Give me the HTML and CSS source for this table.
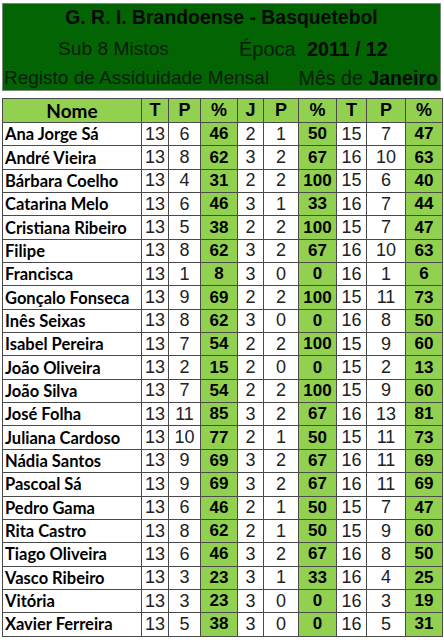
FILE: index.html
```html
<!DOCTYPE html>
<html lang="pt">
<head>
<meta charset="utf-8">
<link rel="stylesheet" href="styles.css">
</head>
<body>
<div class="banner">
  <div class="title">G. R. I. Brandoense - Basquetebol</div>
  <div class="line2"><span class="sub">Sub 8 Mistos</span><span class="epoca">Época <b>2011 / 12</b></span></div>
  <div class="line3"><span class="reg">Registo de Assiduidade Mensal</span><span class="mes">Mês de <b>Janeiro</b></span></div>
</div>
<table class="grid">
  <colgroup>
    <col class="c-name"><col class="c-t"><col class="c-p"><col class="c-pc"><col class="c-j"><col class="c-p2"><col class="c-pc2"><col class="c-t2"><col class="c-p3"><col class="c-pc3">
  </colgroup>
  <thead>
    <tr><th class="name-h">Nome</th><th>T</th><th>P</th><th>%</th><th>J</th><th>P</th><th>%</th><th>T</th><th>P</th><th>%</th></tr>
  </thead>
  <tbody id="rows"></tbody>
</table>
<script src="app.js"></script>
</body>
</html>
```
FILE: app.js
```js
const data = [
["Ana Jorge Sá",13,6,46,2,1,50,15,7,47],
["André Vieira",13,8,62,3,2,67,16,10,63],
["Bárbara Coelho",13,4,31,2,2,100,15,6,40],
["Catarina Melo",13,6,46,3,1,33,16,7,44],
["Cristiana Ribeiro",13,5,38,2,2,100,15,7,47],
["Filipe",13,8,62,3,2,67,16,10,63],
["Francisca",13,1,8,3,0,0,16,1,6],
["Gonçalo Fonseca",13,9,69,2,2,100,15,11,73],
["Inês Seixas",13,8,62,3,0,0,16,8,50],
["Isabel Pereira",13,7,54,2,2,100,15,9,60],
["João Oliveira",13,2,15,2,0,0,15,2,13],
["João Silva",13,7,54,2,2,100,15,9,60],
["José Folha",13,11,85,3,2,67,16,13,81],
["Juliana Cardoso",13,10,77,2,1,50,15,11,73],
["Nádia Santos",13,9,69,3,2,67,16,11,69],
["Pascoal Sá",13,9,69,3,2,67,16,11,69],
["Pedro Gama",13,6,46,2,1,50,15,7,47],
["Rita Castro",13,8,62,2,1,50,15,9,60],
["Tiago Oliveira",13,6,46,3,2,67,16,8,50],
["Vasco Ribeiro",13,3,23,3,1,33,16,4,25],
["Vitória",13,3,23,3,0,0,16,3,19],
["Xavier Ferreira",13,5,38,3,0,0,16,5,31]
];
const tb = document.getElementById("rows");
const pct = new Set([3,6,9]);
data.forEach(r => {
  const tr = document.createElement("tr");
  r.forEach((v, i) => {
    const td = document.createElement("td");
    td.textContent = v;
    td.className = i === 0 ? "name" : (pct.has(i) ? "pct" : "num");
    tr.appendChild(td);
  });
  tb.appendChild(tr);
});
```
FILE: styles.css
```css
html, body { margin: 0; padding: 0; background: #fff; }
body { width: 444px; height: 640px; overflow: hidden; font-family: "Liberation Sans", Arial, sans-serif; }

.banner {
  margin: 3px 3px 0 2px;
  height: 88px;
  box-sizing: border-box;
  background: #026402;
  border: 1px solid #7a8a7a;
  display: flex;
  flex-direction: column;
  color: #0a1d0a;
}
.title {
  font-weight: bold;
  font-size: 19.4px;
  color: #030803;
  text-align: center;
  height: 28px;
  line-height: 26px;
}
.line2 {
  display: flex;
  font-size: 19.2px;
  height: 31px;
  line-height: 34px;
}
.line2 .sub { margin-left: 55px; width: 181px; }
.line2 .epoca { font-size: 20px; }
.line2 b { margin-left: 6px; color: #030803; font-size: 19.5px; }
.line3 {
  display: flex;
  justify-content: space-between;
  height: 27px;
  line-height: 30px;
  padding: 0 2px 0 1px;
}
.line3 .reg { font-size: 19px; }
.line3 .mes { font-size: 19.6px; }
.line3 b { color: #030803; }

.grid {
  margin: 7px 0 0 2px;
  width: 440px;
  table-layout: fixed;
  border-collapse: collapse;
}
.c-name { width: 139px; }
.c-t { width: 27px; }
.c-p { width: 32px; }
.c-pc { width: 37px; }
.c-j { width: 26px; }
.c-p2 { width: 35px; }
.c-pc2 { width: 38px; }
.c-t2 { width: 30px; }
.c-p3 { width: 39px; }
.c-pc3 { width: 37px; }

.grid th, .grid td {
  border: 1px solid #4a4a4a;
  padding: 0;
  height: 22.35px;
  text-align: center;
  overflow: hidden;
  white-space: nowrap;
}
.grid th {
  background: #92d050;
  font-size: 18px;
  font-weight: bold;
  color: #000;
}
.grid th.name-h { font-family: Lato, "Open Sans", sans-serif; font-size: 19px; }
.grid td.name {
  text-align: left;
  padding-left: 2px;
  font-family: Lato, "Open Sans", sans-serif;
  font-weight: bold;
  font-size: 16.5px;
  color: #000;
}
.grid td.num {
  font-size: 18px;
  color: #222;
  background: #fff;
}
.grid td.pct {
  background: #92d050;
  font-weight: bold;
  font-size: 17px;
  color: #000;
}
```
